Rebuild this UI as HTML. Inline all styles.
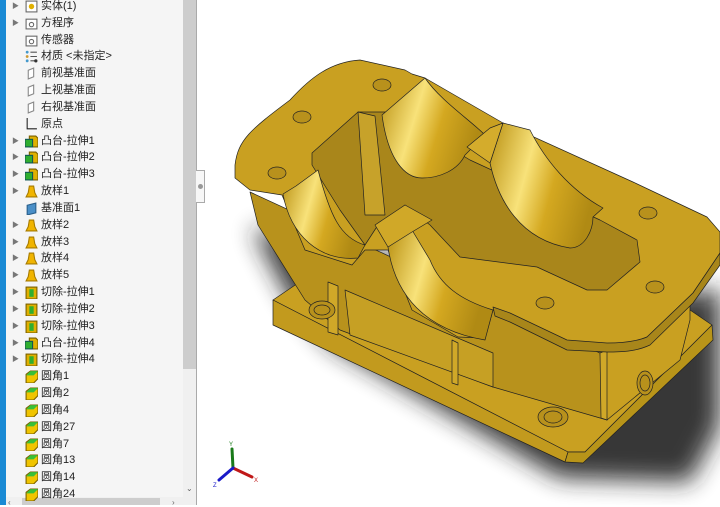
<!DOCTYPE html>
<html><head><meta charset="utf-8"><style>
*{margin:0;padding:0;box-sizing:border-box}
body{width:720px;height:505px;overflow:hidden;background:#fff;font-family:"Liberation Sans","Noto Sans CJK SC",sans-serif;position:relative}
#strip{position:absolute;left:0;top:0;width:6px;height:505px;background:#1a8ad4}
#panel{position:absolute;left:6px;top:0;width:177px;height:497px;background:#f5f5f5}
#vs{position:absolute;left:183px;top:0;width:13px;height:497px;background:#f0f0f0}
#thumb{position:absolute;left:183px;top:0;width:13px;height:369px;background:#cdcdcd}
#hs{position:absolute;left:6px;top:497px;width:190px;height:8px;background:#f0f0f0}
#hthumb{position:absolute;left:22px;top:498px;width:138px;height:7px;background:#cdcdcd}
#bord{position:absolute;left:196px;top:0;width:1px;height:505px;background:#aaa}
#grip{position:absolute;left:196px;top:170px;width:9px;height:33px;background:#f7f7f7;border:1px solid #aaa;border-left:none}
#grip i{position:absolute;left:2px;top:13px;width:5px;height:5px;border-radius:50%;background:#999}
.r{position:absolute;left:0;height:17px;font-size:11px;color:#222;line-height:17px;white-space:nowrap}
.r .a{position:absolute;left:12px;top:0;font-size:7px;color:#777}
.r .ic{position:absolute;left:25px;top:2px;width:13px;height:13px}
.r .t{position:absolute;left:41px;top:0}
</style></head><body>
<div id="strip"></div>
<div id="panel"></div>
<div id="vs"></div><div id="thumb"></div>
<div id="hs"></div><div id="hthumb"></div>
<div style="position:absolute;left:8px;top:498px;font-size:8px;color:#666">‹</div>
<div style="position:absolute;left:172px;top:498px;font-size:8px;color:#666">›</div>
<div style="position:absolute;left:186px;top:484px;font-size:8px;color:#666">⌄</div>
<div id="bord"></div><div id="grip"><i></i></div>
<div id="tree"></div>
<script>
var rows=[["实体(1)","b",1],["方程序","s",1],["传感器","s",0],["材质 <未指定>","m",0],["前视基准面","p",0],["上视基准面","p",0],["右视基准面","p",0],["原点","o",0],["凸台-拉伸1","g",1],["凸台-拉伸2","g",1],["凸台-拉伸3","g",1],["放样1","l",1],["基准面1","d",0],["放样2","l",1],["放样3","l",1],["放样4","l",1],["放样5","l",1],["切除-拉伸1","c",1],["切除-拉伸2","c",1],["切除-拉伸3","c",1],["凸台-拉伸4","g",1],["切除-拉伸4","c",1],["圆角1","f",0],["圆角2","f",0],["圆角4","f",0],["圆角27","f",0],["圆角7","f",0],["圆角13","f",0],["圆角14","f",0],["圆角24","f",0]];
var ic={b:'<rect x="1" y="1" width="10" height="10" fill="#fff" stroke="#666"/><circle cx="6" cy="6" r="2.5" fill="#e0b000"/>',
s:'<rect x="1" y="2" width="10" height="9" fill="#fff" stroke="#666"/><circle cx="6" cy="7" r="2" fill="none" stroke="#666"/>',
m:'<circle cx="2" cy="2" r="1.3" fill="#49c"/><circle cx="2" cy="6" r="1.3" fill="#c93"/><circle cx="2" cy="10" r="1.3" fill="#49c"/><path d="M5 2h6M5 6h6M5 10h4" stroke="#555"/><circle cx="10" cy="10" r="1.5" fill="#333"/>',
p:'<path d="M3 3l5-2v8l-5 2z" fill="#fff" stroke="#888"/>',
o:'<path d="M2 0v10h9" stroke="#222" fill="none"/>',
g:'<path d="M4 1h6l2 2v8H4z" fill="#e0b000" stroke="#7a6000"/><rect x="0" y="4" width="7" height="7" fill="#2fae2f" stroke="#155"/>',
l:'<path d="M4 1h4l1 6 2 4H1l2-4z" fill="#f0b400" stroke="#a67b00"/>',
d:'<path d="M2 3l8-2v9l-8 2z" fill="#4a8fc7" stroke="#2a5f8a"/>',
c:'<rect x="1" y="1" width="10" height="11" fill="#e0b000" stroke="#7a6000"/><rect x="4" y="3" width="4" height="7" fill="#2fae2f"/>',
f:'<path d="M1 4l4-3h7v7l-4 4H1z" fill="#f0c400" stroke="#7a6000"/><path d="M5 1h7l-4 4H1z" fill="#38c038"/>'};
var h="";rows.forEach(function(r,i){var y=-2+i*16.83;h+='<div class="r" style="top:'+y+'px">'+(r[2]?'<span class="a">▶</span>':'')+'<svg class="ic" viewBox="0 0 12 12">'+ic[r[1]]+'</svg><span class="t">'+r[0].replace(/</g,"&lt;")+'</span></div>';});
document.getElementById("tree").innerHTML=h;
</script>
<svg style="position:absolute;left:0;top:0" width="720" height="505" viewBox="0 0 720 505">
<defs>
<filter id="bl" x="-30%" y="-30%" width="160%" height="160%"><feGaussianBlur stdDeviation="12"/></filter>
<linearGradient id="cy" x1="0" y1="0" x2="1" y2="0.3"><stop offset="0" stop-color="#b88f10"/><stop offset="0.4" stop-color="#f8e27a"/><stop offset="0.65" stop-color="#d4a820"/><stop offset="1" stop-color="#b08a14"/></linearGradient>
</defs>
<path d="M252 228 L290 300 L330 345 L560 478 L690 482 L720 425 L720 290 L600 300 L400 260 Z" fill="#222" filter="url(#bl)" opacity="0.9"/>
<g stroke="#222" stroke-width="0.7" stroke-linejoin="round">
<!-- base -->
<path d="M273 300 L310 275 L690 310 L712 325 L585 452 L568 452 Z" fill="#c9a021"/>
<path d="M273 300 L568 452 L565 462 L273 325 Z" fill="#c29a1e"/>
<path d="M568 452 L585 452 L712 325 L713 340 L583 463 L565 462 Z" fill="#b89419"/>
<!-- body -->
<path d="M250 192 L495 305 L600 353 L607 420 L493 387 L340 330 L305 300 L258 225 Z" fill="#b8921c"/>
<path d="M345 290 L493 353 L493 387 L350 335 Z" fill="#c6a024"/>
<path d="M600 340 L690 300 L690 320 L680 360 L607 420 Z" fill="#c9a021"/>
<path d="M328 282 L338 286 L338 335 L328 332 Z M452 340 L458 343 L458 385 L452 383 Z M600 353 L607 350 L607 420 L601 418 Z" fill="#d0a828"/>
<!-- top plate -->
<path d="M235 165 C238 140 250 130 290 100 C310 78 330 62 360 60 L405 70 L412 74 L425 78 L503 123 L633 182 L707 217 L720 232 L720 253 L693 293 L647 337 C630 345 615 345 607 345 L567 342 L510 315 L493 310 L485 338 L458 337 L412 310 L388 250 L365 250 L352 265 L305 250 L282 195 L250 190 L235 178 Z" fill="#c9a021"/>
<path d="M493 307 L510 313 L567 340 L607 343 C620 343 635 342 647 337 L693 293 L720 253 L720 265 L693 303 L650 345 C635 352 620 352 607 352 L567 350 L510 322 L495 316 Z" fill="#a8861a"/>
<!-- trough -->
<path d="M312 153 L358 112 L390 112 L470 160 L600 220 L637 240 L640 262 L607 290 L587 290 L537 267 L460 257 L430 225 L405 205 L378 225 L365 245 L340 210 L312 165 Z" fill="#a9861b"/>
<path d="M358 112 L375 116 L385 215 L365 215 Z" fill="#c7a22a"/>
<!-- saddles -->
<path d="M382 115 C388 160 405 178 422 178 C440 178 458 170 465 155 L485 135 C470 120 440 100 425 78 Z" fill="url(#cy)"/>
<path d="M490 163 C498 200 520 240 570 248 C585 248 593 230 593 217 L603 208 C570 190 545 160 530 130 L503 123 Z" fill="url(#cy)"/>
<path d="M467 147 L490 128 L503 123 L490 163 Z" fill="#d4ac2c"/>
<path d="M283 194 C290 235 320 262 358 258 L365 245 C340 238 330 215 318 170 L296 186 Z" fill="url(#cy)"/>
<path d="M388 247 C395 295 425 330 485 340 L493 310 C460 300 440 285 430 260 L412 230 Z" fill="url(#cy)"/>
<path d="M375 225 L405 205 L432 220 L412 232 L388 247 Z" fill="#d0a828"/>
</g>
<!-- holes -->
<g fill="#b8911c" stroke="#222" stroke-width="0.7">
<ellipse cx="382" cy="85" rx="9" ry="6"/><ellipse cx="302" cy="117" rx="9" ry="6"/><ellipse cx="277" cy="173" rx="9" ry="6"/>
<ellipse cx="648" cy="213" rx="9" ry="6"/><ellipse cx="655" cy="287" rx="9" ry="6"/><ellipse cx="545" cy="303" rx="9" ry="6"/>
<ellipse cx="553" cy="417" rx="15" ry="10"/><ellipse cx="553" cy="417" rx="9" ry="6"/>
<ellipse cx="322" cy="310" rx="13" ry="9"/><ellipse cx="322" cy="310" rx="8" ry="5"/>
<ellipse cx="645" cy="383" rx="8" ry="12"/><ellipse cx="645" cy="383" rx="5" ry="8"/>
</g>
<!-- triad -->
<g stroke-width="3" stroke-linecap="round">
<line x1="233" y1="468" x2="232" y2="449" stroke="#1a7a1a"/>
<line x1="233" y1="468" x2="252" y2="477" stroke="#c01818"/>
<line x1="233" y1="468" x2="219" y2="480" stroke="#1a1ac8"/>
</g>
<text x="229" y="446" font-size="6" fill="#1a7a1a" font-family="Liberation Sans">Y</text>
<text x="254" y="482" font-size="6" fill="#c01818" font-family="Liberation Sans">X</text>
<text x="213" y="487" font-size="6" fill="#1a1ac8" font-family="Liberation Sans">Z</text>
</svg>
</body></html>
